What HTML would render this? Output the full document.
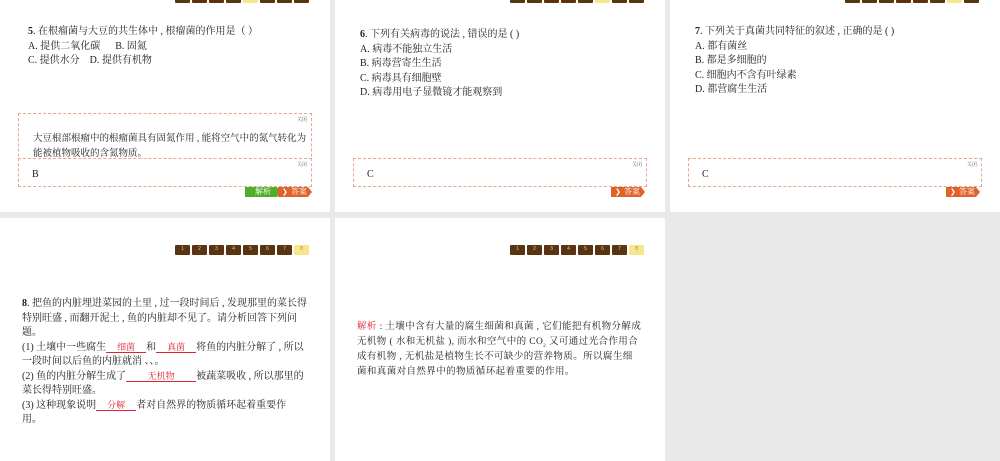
<!DOCTYPE html>
<html><head><meta charset="utf-8"><style>
*{margin:0;padding:0;box-sizing:border-box}
body{width:1000px;height:461px;background:#e9e9e9;position:relative;overflow:hidden;font-family:"Liberation Serif","Noto Serif CJK SC",serif;color:#222}
.p{position:absolute;background:#fff;overflow:hidden}
.nav{position:absolute;display:flex;gap:2px}
.nav span{width:15px;background:#5a3410;border-radius:1px;font:5px "Liberation Sans",sans-serif;color:#d9c9a0;text-align:center;line-height:9px}
.nav span.y{background:#f6e68e;color:#b08a40}
.t{position:absolute;font-size:10px;line-height:14.5px;white-space:nowrap}
.box{position:absolute;border:1px dashed #e2a98c;background:#fff;overflow:hidden}
.close{position:absolute;right:4px;top:2px;font-size:5px;color:#666}
.ans{position:absolute;height:10px;width:34px;background:#e0622a;color:#fff;font-size:8px;line-height:10px;padding-left:13px;clip-path:polygon(0 0,88% 0,100% 50%,88% 100%,0 100%)}
.ans:before{content:"❯";position:absolute;left:4px;font-size:7px}
.jx{position:absolute;height:10px;width:36px;background:#4fae2a;color:#fff;font-size:8px;line-height:10px;padding-left:10px;clip-path:polygon(0 0,88% 0,100% 50%,88% 100%,0 100%)}
.r{color:#d23;}
.u{display:inline-block;color:#d23;border-bottom:1px solid #d23;font-size:9px;line-height:10px;text-align:center;vertical-align:baseline}
.s{position:relative;top:3px;font-size:5px;line-height:0}
</style></head><body>

<div class="p" style="left:0;top:0;width:330px;height:212px">
 <div class="nav" style="left:175px;top:-6px"><span style="height:9px"></span><span></span><span></span><span></span><span class="y"></span><span></span><span></span><span></span></div>
 <div class="t" style="left:28px;top:25px"><b>5</b>. 在根瘤菌与大豆的共生体中 , 根瘤菌的作用是（ ）<br>A. 提供二氧化碳&nbsp;&nbsp;&nbsp;&nbsp;&nbsp;&nbsp;B. 固氮<br>C. 提供水分&nbsp;&nbsp;&nbsp;&nbsp;D. 提供有机物</div>
 <div class="box" style="left:18px;top:113px;width:294px;height:74px"><div class="close">关闭</div><div class="t" style="left:14px;top:18px;font-size:9.5px">大豆根部根瘤中的根瘤菌具有固氮作用 , 能将空气中的氮气转化为<br>能被植物吸收的含氮物质。</div></div>
 <div class="box" style="left:18px;top:158px;width:294px;height:29px"><div class="close">关闭</div><div class="t" style="left:13px;top:9px">B</div></div>
 <div class="jx" style="left:245px;top:187px">解析</div>
 <div class="ans" style="left:278px;top:187px">答案</div>
</div>

<div class="p" style="left:335px;top:0;width:330px;height:212px">
 <div class="nav" style="left:175px;top:-6px"><span style="height:9px"></span><span></span><span></span><span></span><span></span><span class="y"></span><span></span><span></span></div>
 <div class="t" style="left:25px;top:28px"><b>6</b>. 下列有关病毒的说法 , 错误的是 ( )<br>A. 病毒不能独立生活<br>B. 病毒营寄生生活<br>C. 病毒具有细胞壁<br>D. 病毒用电子显微镜才能观察到</div>
 <div class="box" style="left:18px;top:158px;width:294px;height:29px"><div class="close">关闭</div><div class="t" style="left:13px;top:9px">C</div></div>
 <div class="ans" style="left:276px;top:187px">答案</div>
</div>

<div class="p" style="left:670px;top:0;width:330px;height:212px">
 <div class="nav" style="left:175px;top:-6px"><span style="height:9px"></span><span></span><span></span><span></span><span></span><span></span><span class="y"></span><span></span></div>
 <div class="t" style="left:25px;top:25px"><b>7</b>. 下列关于真菌共同特征的叙述 , 正确的是 ( )<br>A. 都有菌丝<br>B. 都是多细胞的<br>C. 细胞内不含有叶绿素<br>D. 都营腐生生活</div>
 <div class="box" style="left:18px;top:158px;width:294px;height:29px"><div class="close">关闭</div><div class="t" style="left:13px;top:9px">C</div></div>
 <div class="ans" style="left:276px;top:187px">答案</div>
</div>

<div class="p" style="left:0;top:218px;width:330px;height:243px">
 <div class="nav" style="left:175px;top:27px"><span style="height:10px">1</span><span>2</span><span>3</span><span>4</span><span>5</span><span>6</span><span>7</span><span class="y">8</span></div>
 <div class="t" style="left:22px;top:79px"><b>8</b>. 把鱼的内脏埋进菜园的土里 , 过一段时间后 , 发现那里的菜长得<br>特别旺盛 , 而翻开泥土 , 鱼的内脏却不见了。请分析回答下列问<br>题。<br>(1) 土壤中一些腐生<span class="u" style="width:40px">细菌</span>和<span class="u" style="width:40px">真菌</span>将鱼的内脏分解了 , 所以<br>一段时间以后鱼的内脏就消 、、。<br>(2) 鱼的内脏分解生成了<span class="u" style="width:70px">无机物</span>被蔬菜吸收 , 所以那里的<br>菜长得特别旺盛。<br>(3) 这种现象说明<span class="u" style="width:40px">分解</span>者对自然界的物质循环起着重要作<br>用。</div>
</div>

<div class="p" style="left:335px;top:218px;width:330px;height:243px">
 <div class="nav" style="left:175px;top:27px"><span style="height:10px">1</span><span>2</span><span>3</span><span>4</span><span>5</span><span>6</span><span>7</span><span class="y">8</span></div>
 <div class="t" style="left:22px;top:102px;font-size:9.5px;line-height:15px;letter-spacing:0.4px"><span class="r">解析</span> : 土壤中含有大量的腐生细菌和真菌 , 它们能把有机物分解成<br>无机物 ( 水和无机盐 ), 而水和空气中的 CO<span class="s">2</span> 又可通过光合作用合<br>成有机物 , 无机盐是植物生长不可缺少的营养物质。所以腐生细<br>菌和真菌对自然界中的物质循环起着重要的作用。</div>
</div>

</body></html>
